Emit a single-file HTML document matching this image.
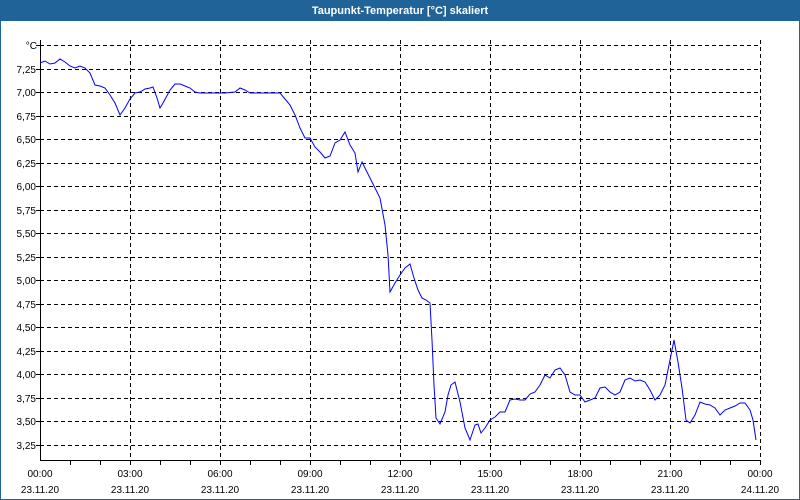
<!DOCTYPE html>
<html><head><meta charset="utf-8"><style>
html,body{margin:0;padding:0;width:800px;height:500px;overflow:hidden;background:#fff;}
svg{display:block;font-family:"Liberation Sans","DejaVu Sans",sans-serif;}
</style></head><body>
<svg width="800" height="500" viewBox="0 0 800 500" xmlns="http://www.w3.org/2000/svg">
<rect x="0" y="0" width="800" height="500" fill="#1f6399"/>
<rect x="1" y="21" width="798" height="478" fill="#fff"/>
<text x="400" y="14" fill="#fff" font-size="11" font-weight="bold" text-anchor="middle">Taupunkt-Temperatur [°C] skaliert</text>
<g stroke="#000" stroke-width="1" stroke-dasharray="4,3" fill="none" shape-rendering="crispEdges">
<line x1="40" y1="45.5" x2="760" y2="45.5"/>
<line x1="40" y1="69.5" x2="760" y2="69.5"/>
<line x1="40" y1="92.5" x2="760" y2="92.5"/>
<line x1="40" y1="116.5" x2="760" y2="116.5"/>
<line x1="40" y1="139.5" x2="760" y2="139.5"/>
<line x1="40" y1="163.5" x2="760" y2="163.5"/>
<line x1="40" y1="186.5" x2="760" y2="186.5"/>
<line x1="40" y1="210.5" x2="760" y2="210.5"/>
<line x1="40" y1="233.5" x2="760" y2="233.5"/>
<line x1="40" y1="257.5" x2="760" y2="257.5"/>
<line x1="40" y1="280.5" x2="760" y2="280.5"/>
<line x1="40" y1="304.5" x2="760" y2="304.5"/>
<line x1="40" y1="327.5" x2="760" y2="327.5"/>
<line x1="40" y1="351.5" x2="760" y2="351.5"/>
<line x1="40" y1="374.5" x2="760" y2="374.5"/>
<line x1="40" y1="398.5" x2="760" y2="398.5"/>
<line x1="40" y1="421.5" x2="760" y2="421.5"/>
<line x1="40" y1="445.5" x2="760" y2="445.5"/>
<line x1="130.5" y1="40" x2="130.5" y2="460"/>
<line x1="220.5" y1="40" x2="220.5" y2="460"/>
<line x1="310.5" y1="40" x2="310.5" y2="460"/>
<line x1="400.5" y1="40" x2="400.5" y2="460"/>
<line x1="490.5" y1="40" x2="490.5" y2="460"/>
<line x1="580.5" y1="40" x2="580.5" y2="460"/>
<line x1="670.5" y1="40" x2="670.5" y2="460"/>
<line x1="760.5" y1="40" x2="760.5" y2="460"/>
</g>
<g stroke="#000" stroke-width="1" shape-rendering="crispEdges">
<line x1="40.5" y1="40" x2="40.5" y2="461"/>
<line x1="40" y1="460.5" x2="761" y2="460.5"/>
<line x1="36" y1="45.5" x2="40" y2="45.5"/>
<line x1="36" y1="69.5" x2="40" y2="69.5"/><line x1="36" y1="92.5" x2="40" y2="92.5"/><line x1="36" y1="116.5" x2="40" y2="116.5"/><line x1="36" y1="139.5" x2="40" y2="139.5"/><line x1="36" y1="163.5" x2="40" y2="163.5"/><line x1="36" y1="186.5" x2="40" y2="186.5"/><line x1="36" y1="210.5" x2="40" y2="210.5"/><line x1="36" y1="233.5" x2="40" y2="233.5"/><line x1="36" y1="257.5" x2="40" y2="257.5"/><line x1="36" y1="280.5" x2="40" y2="280.5"/><line x1="36" y1="304.5" x2="40" y2="304.5"/><line x1="36" y1="327.5" x2="40" y2="327.5"/><line x1="36" y1="351.5" x2="40" y2="351.5"/><line x1="36" y1="374.5" x2="40" y2="374.5"/><line x1="36" y1="398.5" x2="40" y2="398.5"/><line x1="36" y1="421.5" x2="40" y2="421.5"/><line x1="36" y1="445.5" x2="40" y2="445.5"/>
<line x1="70.5" y1="460" x2="70.5" y2="465"/><line x1="100.5" y1="460" x2="100.5" y2="465"/><line x1="130.5" y1="460" x2="130.5" y2="465"/><line x1="160.5" y1="460" x2="160.5" y2="465"/><line x1="190.5" y1="460" x2="190.5" y2="465"/><line x1="220.5" y1="460" x2="220.5" y2="465"/><line x1="250.5" y1="460" x2="250.5" y2="465"/><line x1="280.5" y1="460" x2="280.5" y2="465"/><line x1="310.5" y1="460" x2="310.5" y2="465"/><line x1="340.5" y1="460" x2="340.5" y2="465"/><line x1="370.5" y1="460" x2="370.5" y2="465"/><line x1="400.5" y1="460" x2="400.5" y2="465"/><line x1="430.5" y1="460" x2="430.5" y2="465"/><line x1="460.5" y1="460" x2="460.5" y2="465"/><line x1="490.5" y1="460" x2="490.5" y2="465"/><line x1="520.5" y1="460" x2="520.5" y2="465"/><line x1="550.5" y1="460" x2="550.5" y2="465"/><line x1="580.5" y1="460" x2="580.5" y2="465"/><line x1="610.5" y1="460" x2="610.5" y2="465"/><line x1="640.5" y1="460" x2="640.5" y2="465"/><line x1="670.5" y1="460" x2="670.5" y2="465"/><line x1="700.5" y1="460" x2="700.5" y2="465"/><line x1="730.5" y1="460" x2="730.5" y2="465"/><line x1="760.5" y1="460" x2="760.5" y2="465"/>
</g>
<g font-size="10" fill="#000" text-anchor="end">
<text x="37" y="49">°C</text>
<text x="36" y="73">7,25</text><text x="36" y="96">7,00</text><text x="36" y="120">6,75</text><text x="36" y="143">6,50</text><text x="36" y="167">6,25</text><text x="36" y="190">6,00</text><text x="36" y="214">5,75</text><text x="36" y="237">5,50</text><text x="36" y="261">5,25</text><text x="36" y="284">5,00</text><text x="36" y="308">4,75</text><text x="36" y="331">4,50</text><text x="36" y="355">4,25</text><text x="36" y="378">4,00</text><text x="36" y="402">3,75</text><text x="36" y="425">3,50</text><text x="36" y="449">3,25</text>
</g>
<g font-size="10" fill="#000" text-anchor="middle">
<text x="40" y="477">00:00</text><text x="40" y="493">23.11.20</text>
<text x="130" y="477">03:00</text><text x="130" y="493">23.11.20</text>
<text x="220" y="477">06:00</text><text x="220" y="493">23.11.20</text>
<text x="310" y="477">09:00</text><text x="310" y="493">23.11.20</text>
<text x="400" y="477">12:00</text><text x="400" y="493">23.11.20</text>
<text x="490" y="477">15:00</text><text x="490" y="493">23.11.20</text>
<text x="580" y="477">18:00</text><text x="580" y="493">23.11.20</text>
<text x="670" y="477">21:00</text><text x="670" y="493">23.11.20</text>
<text x="760" y="477">00:00</text><text x="760" y="493">24.11.20</text>
</g>
<polyline fill="none" stroke="#0000ff" stroke-width="1" points="40,63 45,61 50,64 55,63 60,59 65,62 70,66 75,68 80,66 85,68 90,73 95,85 100,86 105,88 110,95 115,103 120,115 125,108 130,99 135,93 140,92 145,89 150,88 153,87 157,98 160,108 163,103 170,90 175,84 180,84 185,86 190,88 195,92 200,93 220,93 225,93 235,92 240,88 245,90 250,93 280,93 285,99 290,105 295,115 300,128 305,138 310,138 315,147 320,152 325,158 330,156 335,143 340,140 345,132 350,145 355,153 358,172 362,162 365,168 370,178 375,188 380,198 385,225 388,255 390,292 395,283 400,275 405,268 410,264 414,278 418,290 422,298 426,300 430,303 432,340 434,385 436,418 440,424 445,412 448,395 451,385 455,382 460,402 465,428 470,440 475,425 478,424 481,433 485,428 490,420 495,417 500,412 505,412 510,400 515,399 520,400 525,400 530,394 535,392 540,385 545,375 550,378 555,370 560,368 565,375 570,392 575,395 580,395 585,402 590,400 595,398 600,388 605,387 610,392 615,395 620,392 625,380 630,378 635,381 640,380 645,382 650,390 655,400 660,395 665,385 670,360 674,340 678,362 682,388 686,420 690,423 695,415 700,402 705,404 710,405 715,408 720,415 725,410 730,408 735,406 740,403 745,403 750,410 753,420 756,440"/>
</svg>
</body></html>
